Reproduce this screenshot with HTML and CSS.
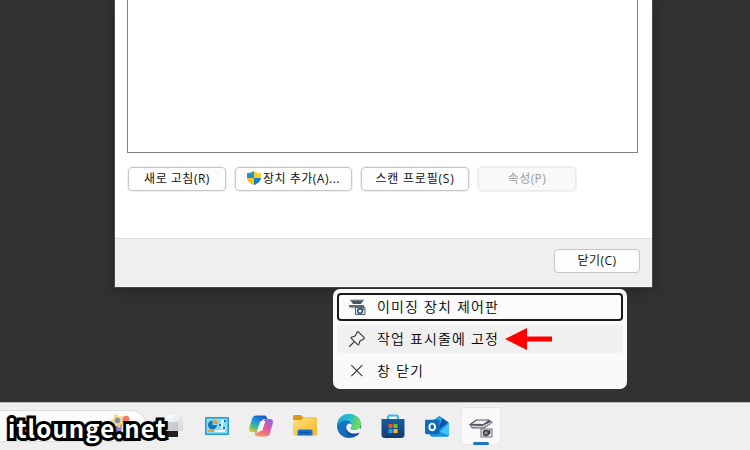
FILE: index.html
```html
<!DOCTYPE html>
<html lang="ko">
<head>
    <meta charset="UTF-8">
    <meta name="viewport" content="width=device-width, initial-scale=1.0">
    <title>itlounge.net</title>
    <link rel="stylesheet" href="styles.css">
</head>
<body>
    <main class="desktop">
        <section class="dialog">
            <div class="dialog-body">
                <div class="device-list"></div>
                <div class="buttons">
                    <button class="btn refresh">새로 고침(R)</button>
                    <button class="btn add">
                        <svg width="14" height="14" viewBox="0 0 14 14">
                            <path d="M7 0C5 1.500 3 2 0 2v5h7z" fill="#1c93d2"/>
                            <path d="M7 0c2 1.500 4 2 7 2v5H7z" fill="#fdd023"/>
                            <path d="M0 7c.3 3.500 3 5.500 7 7V7z" fill="#f6c51b"/>
                            <path d="M14 7c-.3 3.500-3 5.500-7 7V7z" fill="#1580c4"/>
                        </svg>
                        <span>장치 추가(A)...</span>
                    </button>
                    <button class="btn profile">스캔 프로필(S)</button>
                    <button class="btn props" disabled>속성(P)</button>
                </div>
            </div>
            <footer class="dialog-footer">
                <button class="btn close">닫기(C)</button>
            </footer>
        </section>

        <!-- jump list -->
        <ul class="menu">
            <li class="focused">
                <svg width="18" height="18" viewBox="0 0 18 18">
                    <path d="M2 2h14l-3 4H5z" fill="#4b5661"/>
                    <path d="M2 1.500h14v1H2z" fill="#9aa8b3"/>
                    <path d="M1 7h15v2H1z" fill="#5c6973"/>
                    <path d="M1 9h7v1.500H3z" fill="#a8b3bb"/>
                    <path d="M7.500 9.500h9.500v7H7.500z" fill="#dbe8f2" stroke="#476078"/>
                    <circle cx="12" cy="13" r="2.300" fill="#fff" stroke="#23415e" stroke-width="1.400"/>
                    <path d="M14.500 10.500h1.500v1.500h-1.500z" fill="#23415e"/>
                </svg>
                <span>이미징 장치 제어판</span>
            </li>
            <li class="hovered">
                <svg width="18" height="18" viewBox="0 0 18 18" fill="none" stroke="#333" stroke-width="1.100" stroke-linejoin="round" stroke-linecap="round">
                    <path d="M10.300 1.800 16.200 7.700Q16.600 8.500 15.800 8.900L12 10.900 10.800 14.500Q10.300 15.300 9.600 14.700L3.300 8.400Q2.700 7.700 3.500 7.200L7.100 6 9.100 2.200Q9.600 1.300 10.300 1.800zM6.300 11.700 1.500 16.500"/>
                </svg>
                <span>작업 표시줄에 고정</span>
                <svg class="arrow" width="47" height="22" viewBox="0 0 47 22">
                    <path d="M0 11 22 0v8.500h25v5H22V22z" fill="#f00"/>
                </svg>
            </li>
            <li>
                <svg width="18" height="18" viewBox="0 0 18 18" stroke="#333" stroke-width="1.100">
                    <path d="M3.300 3.200l11 11M14.300 3.200l-11 11"/>
                </svg>
                <span>창 닫기</span>
            </li>
        </ul>

        <nav class="taskbar">
            <div class="search">
                <svg width="28" height="26" viewBox="0 0 28 26">
                    <path d="M10 12h9l-1 13h-6z" fill="#9a78cf"/>
                    <path d="M19 9c0-4 2-6 6-5 3 2 1 7-3 8z" fill="#f37a68"/>
                    <path d="M3 9l6 1-2 5-5-1z" fill="#e6a04b"/>
                    <path d="M14 2l2 3 4-1-1 4 3 3-4 1-1 4-3-2-4 1v-4L7 9l4-2V3z" fill="#f6d680"/>
                    <circle cx="14.500" cy="8.500" r="2.700" fill="#89949a"/>
                </svg>
            </div>
            <div class="icon taskview">
                <svg width="24" height="24" viewBox="0 0 24 24">
                    <defs>
                        <linearGradient id="tv" x2="1" y2="1"><stop stop-color="#fff"/><stop offset="1" stop-color="#d3d3d3"/></linearGradient>
                    </defs>
                    <path d="M5 8h14v15H5z" fill="#222"/>
                    <rect x="7" y="1" width="17" height="16" rx="1.500" fill="url(#tv)"/>
                    <path d="M7 8h12v9H7z" fill="#b4b4b4" opacity=".5"/>
                </svg>
            </div>
            <div class="icon">
                <svg width="24" height="24" viewBox="0 0 24 24">
                    <rect x="0" y="3" width="24" height="18" rx="1" fill="#269bc9"/>
                    <rect x="1.500" y="4.500" width="21" height="15" fill="#83dcf9"/>
                    <path d="M7.500 6.500a4.500 4.500 0 1 0 4.500 4.500H7.500z" fill="#1675b9"/>
                    <path d="M8.500 5.500V10H13a4.500 4.500 0 0 0-4.500-4.500z" fill="#f49a32"/>
                    <path d="M14 11h3V7h4M17 11v3h4" fill="none" stroke="#fff" stroke-width="1.500"/>
                    <path d="M14 10h2v2h-2zM19 6h2v2h-2zM18 13h2v2h-2z" fill="#1b72ae"/>
                    <path d="M3 17h6" stroke="#f49a32" stroke-width="2"/>
                    <path d="M10 17h10" stroke="#fff" stroke-width="2"/>
                </svg>
            </div>
            <div class="icon">
                <svg width="24" height="24" viewBox="0 0 24 24">
                    <defs>
                        <linearGradient id="cpA" x1=".7" y1="0" x2=".2" y2="1"><stop stop-color="#1c56c7"/><stop offset=".4" stop-color="#1b9ade"/><stop offset=".75" stop-color="#57bd7b"/><stop offset="1" stop-color="#e8c72c"/></linearGradient>
                        <linearGradient id="cpB" x1=".8" y1="0" x2=".2" y2="1"><stop stop-color="#9461e1"/><stop offset=".5" stop-color="#e65c9d"/><stop offset="1" stop-color="#f89b56"/></linearGradient>
                    </defs>
                    <path d="M7 1.500h8.500c1.700 0 2.300 1.500 2.800 3.500h-2.500c-2 0-2.800 1-3.400 3l-2 6.500c-.8 2.500-1.700 3.500-4 3.500H3c-3 0-3.200-2.500-2.500-5L3 5c.7-2.200 1.800-3.500 4-3.500z" fill="url(#cpA)"/>
                    <path d="M17 22.500H9c-2.200 0-3-1.500-3.500-4H8c2.300 0 3.200-1 4-3.500L14 8.500C14.700 6 15.500 5 17.800 5H21c3 0 3.300 2.500 2.600 5L21 19c-.7 2.200-1.800 3.500-4 3.500z" fill="url(#cpB)"/>
                    <path d="M11.500 7h5l-3.500 10H7.800z" fill="#f7f4f8"/>
                </svg>
            </div>
            <div class="icon">
                <svg width="24" height="24" viewBox="0 0 24 24">
                    <defs>
                        <linearGradient id="fd" x2="1" y2="1"><stop stop-color="#ffdf76"/><stop offset="1" stop-color="#f4b82e"/></linearGradient>
                    </defs>
                    <path d="M0 2.500Q0 1 1.500 1H8l2.500 2.500H22Q24 3.500 24 5v8H0z" fill="#d99a16"/>
                    <path d="M0 6h8l2.500-2.500H22q2 0 2 2V20q0 1.500-1.500 1.500h-21Q0 21.500 0 20z" fill="url(#fd)"/>
                    <path d="M4.500 21.500v-4Q4.500 15.500 6.500 15.500h11q2 0 2 2v4z" fill="#1672c9"/>
                    <path d="M7 18.500h10" stroke="#0a519c" stroke-width="1.500" stroke-linecap="round"/>
                </svg>
            </div>
            <div class="icon">
                <svg width="24" height="24" viewBox="0 0 24 24">
                    <defs>
                        <linearGradient id="edA" x2="1" y2=".3"><stop stop-color="#249fdc"/><stop offset=".55" stop-color="#29bfce"/><stop offset="1" stop-color="#72da55"/></linearGradient>
                        <linearGradient id="edB" x2=".5" y2="1"><stop stop-color="#1787cf"/><stop offset="1" stop-color="#1262b3"/></linearGradient>
                    </defs>
                    <circle cx="12" cy="12" r="12" fill="url(#edB)"/>
                    <path d="M0 11.500C.5 4.500 5.600 0 12 0c7 0 12 4.500 12 9.600 0 4-3 6.400-6.500 6.400-2.500 0-4-.8-4-1.800 0-.8 1.300-1.200 1.300-3C14.800 8.500 12.500 6.500 9 6.500c-4 0-7.500 2-9 5z" fill="url(#edA)"/>
                    <path d="M9.300 11.500C7 16 10.500 22.500 16.500 22.500c3 0 5-1.800 6.300-4.100-5.800 2.800-11.600.2-12.300-4z" fill="#134f9f"/>
                    <path d="M14.800 11.200c0 1.800-1.300 2.200-1.300 3 0 1 1.500 1.800 4 1.800 2.200 0 4.100-.9 5.300-2.400q2 2.400 0 4.800C17 21 10 19 9.200 14c-.3-2.500 1.400-4.600 3.300-4.600 1.300 0 2.300.7 2.300 1.800z" fill="#f0f3f5"/>
                </svg>
            </div>
            <div class="icon">
                <svg width="24" height="24" viewBox="0 0 24 24">
                    <defs>
                        <linearGradient id="st" y2="1" x2="0"><stop stop-color="#195e9d"/><stop offset="1" stop-color="#123c73"/></linearGradient>
                    </defs>
                    <path d="M7 6V3Q7 1.500 8.500 1.500h7Q17 1.500 17 3v3" fill="none" stroke="#36b8ea" stroke-width="2"/>
                    <path d="M.5 5h23v15.500Q23.500 24 20 24H4Q.5 24 .5 20.500z" fill="url(#st)"/>
                    <path d="M7.500 10h4v4h-4z" fill="#f25325"/><path d="M12.500 10h4v4h-4z" fill="#80ba2b"/>
                    <path d="M7.500 15h4v4h-4z" fill="#23a5e9"/><path d="M12.500 15h4v4h-4z" fill="#fdb923"/>
                </svg>
            </div>
            <div class="icon">
                <svg width="24" height="24" viewBox="0 0 25 24">
                    <path d="M5 8.500 15 1.500 25 8.500v13Q25 23 23 23H9q-4 0-4-3z" fill="#168adb"/>
                    <path d="M7 8 15 3l8 5-10 6z" fill="#2ba6e9"/>
                    <path d="M18 4l6 4-11 9z" fill="#0d55a7"/>
                    <path d="M25 9v12.500Q25 23 23 23H10z" fill="#41c5f4"/>
                    <path d="M5 14l20 8q-.5 1-2 1H9q-4 0-4-3z" fill="#1c93df"/>
                    <rect x="0" y="5.500" width="15" height="15" rx="1.500" fill="#126abb"/>
                    <ellipse cx="7.500" cy="13" rx="3" ry="3.500" fill="none" stroke="#fff" stroke-width="2"/>
                </svg>
            </div>
            <div class="icon active">
                <svg width="24" height="20" viewBox="0 0 24 20">
                    <path d="M0 6.500 7 1.500h13l4 3-9 6H3z" fill="#555962"/>
                    <path d="M3 5.800 8 2.500h11L14 6z" fill="#f4f5f7"/>
                    <path d="M1 7.500 13 8l9-4 1 .8-8.500 4.700H4z" fill="#c9cbd0"/>
                    <rect x="12" y="11" width="11" height="8" fill="#e2e3e8" stroke="#71747c"/>
                    <circle cx="17" cy="15" r="2.500" fill="#8f9298" stroke="#3d4148" stroke-width="1.500"/>
                    <path d="M20.500 12v4" stroke="#353942" stroke-width="1.500"/>
                </svg>
            </div>
        </nav>
        <div class="watermark">itlounge.net</div>
    </main>
</body>
</html>
```
FILE: styles.css
```css
*, *::before, *::after {
    box-sizing: border-box;
}
body {
    margin: 0;
    background: #323232;
    font-family: "Noto Sans CJK KR", sans-serif;
}
svg {
    display: block;
    flex: none;
}
.desktop {
    position: relative;
    display: flex;
    flex-direction: column;
    justify-content: space-between;
    width: 750px;
    height: 450px;
    overflow: hidden;
}
.dialog {
    width: 539px;
    height: 288px;
    margin-left: 114px;
    display: flex;
    flex-direction: column;
    background: #fff;
    border: 1px solid #484848;
    border-top: 0;
    box-shadow: 0 2px 14px rgba(0, 0, 0, 0.3);
}
.dialog-body {
    flex: 1;
    padding: 0 14px 0 12px;
}
.device-list {
    height: 153px;
    width: 511px;
    border: 1px solid #828282;
    border-top: 0;
}
.buttons {
    display: flex;
    gap: 9px;
    margin: 14px 0 0 1px;
}
.btn {
    display: flex;
    align-items: center;
    justify-content: center;
    height: 24px;
    padding: 0 0 2px;
    border: 1px solid #c6c6c6;
    border-radius: 4px;
    background: #fdfdfd;
    color: #111;
    font-family: "Open Sans", "Noto Sans CJK KR", sans-serif;
    font-size: 12px;
    letter-spacing: 0.5px;
    white-space: nowrap;
}
.buttons .btn {
    outline: 1px solid #f0f0f0;
}
.refresh {
    width: 98px;
}
.add {
    width: 117px;
    gap: 2px;
}
.profile {
    width: 108px;
    letter-spacing: 0.8px;
}
.props {
    width: 98px;
    letter-spacing: 0.4px;
}
.btn:disabled {
    color: #9c9c9c;
    background: #f9f9f9;
    border-color: #ebebeb;
}
.dialog-footer {
    display: flex;
    justify-content: flex-end;
    height: 49px;
    padding: 10px 12px 0 0;
    background: #efefef;
    border-top: 1px solid #dcdcdc;
}
.close {
    width: 86px;
}
.menu {
    position: absolute;
    left: 333px;
    top: 289px;
    z-index: 1;
    width: 294px;
    height: 100px;
    margin: 0;
    padding: 4px;
    display: flex;
    flex-direction: column;
    gap: 4px;
    list-style: none;
    background: #f9f9f9;
    border-radius: 7px;
}
.menu li {
    display: flex;
    align-items: center;
    height: 28px;
    padding-left: 11px;
    border-radius: 4px;
    color: #000;
    font-size: 14px;
    font-weight: 350;
    letter-spacing: 1.1px;
    white-space: nowrap;
}
.menu span {
    margin: 0 0 2px 11px;
}
.menu .focused {
    padding-left: 9px;
    border: 2px solid #1a1a1a;
    background: #fbfbfb;
}
.menu .hovered {
    background: #f0f0f0;
}
.arrow {
    margin-left: 6px;
}
.taskbar {
    display: flex;
    align-items: center;
    height: 48px;
    padding-bottom: 1px;
    background: #efefef;
    border-top: 1px solid #b9b9b9;
}
.search {
    display: flex;
    justify-content: flex-end;
    align-items: flex-start;
    width: 147px;
    height: 32px;
    margin-right: 4px;
    padding: 1px 15px 0 0;
    background: #fbfbfb;
    border: 1px solid #dedede;
    border-left: 0;
    border-radius: 0 16px 16px 0;
}
.icon {
    display: flex;
    align-items: center;
    justify-content: center;
    width: 40px;
    height: 38px;
    margin-left: 4px;
}
.taskview {
    margin-left: 0;
    margin-right: 2px;
}
.active {
    position: relative;
    padding-top: 3px;
    background: #fafafa;
    border: 1px solid #e6e6e6;
    border-radius: 4px;
}
.active::after {
    content: "";
    position: absolute;
    left: 11px;
    bottom: -1px;
    width: 16px;
    height: 3px;
    border-radius: 2px;
    background: #1976c5;
}
.watermark {
    position: absolute;
    left: 8px;
    top: 411px;
    color: #fff;
    font-family: "Noto Sans CJK KR", sans-serif;
    font-size: 24px;
    font-weight: bold;
    line-height: 34px;
    letter-spacing: 1.1px;
    -webkit-text-stroke: 6px #000;
    stroke-linejoin: round;
    paint-order: stroke fill;
}
```
